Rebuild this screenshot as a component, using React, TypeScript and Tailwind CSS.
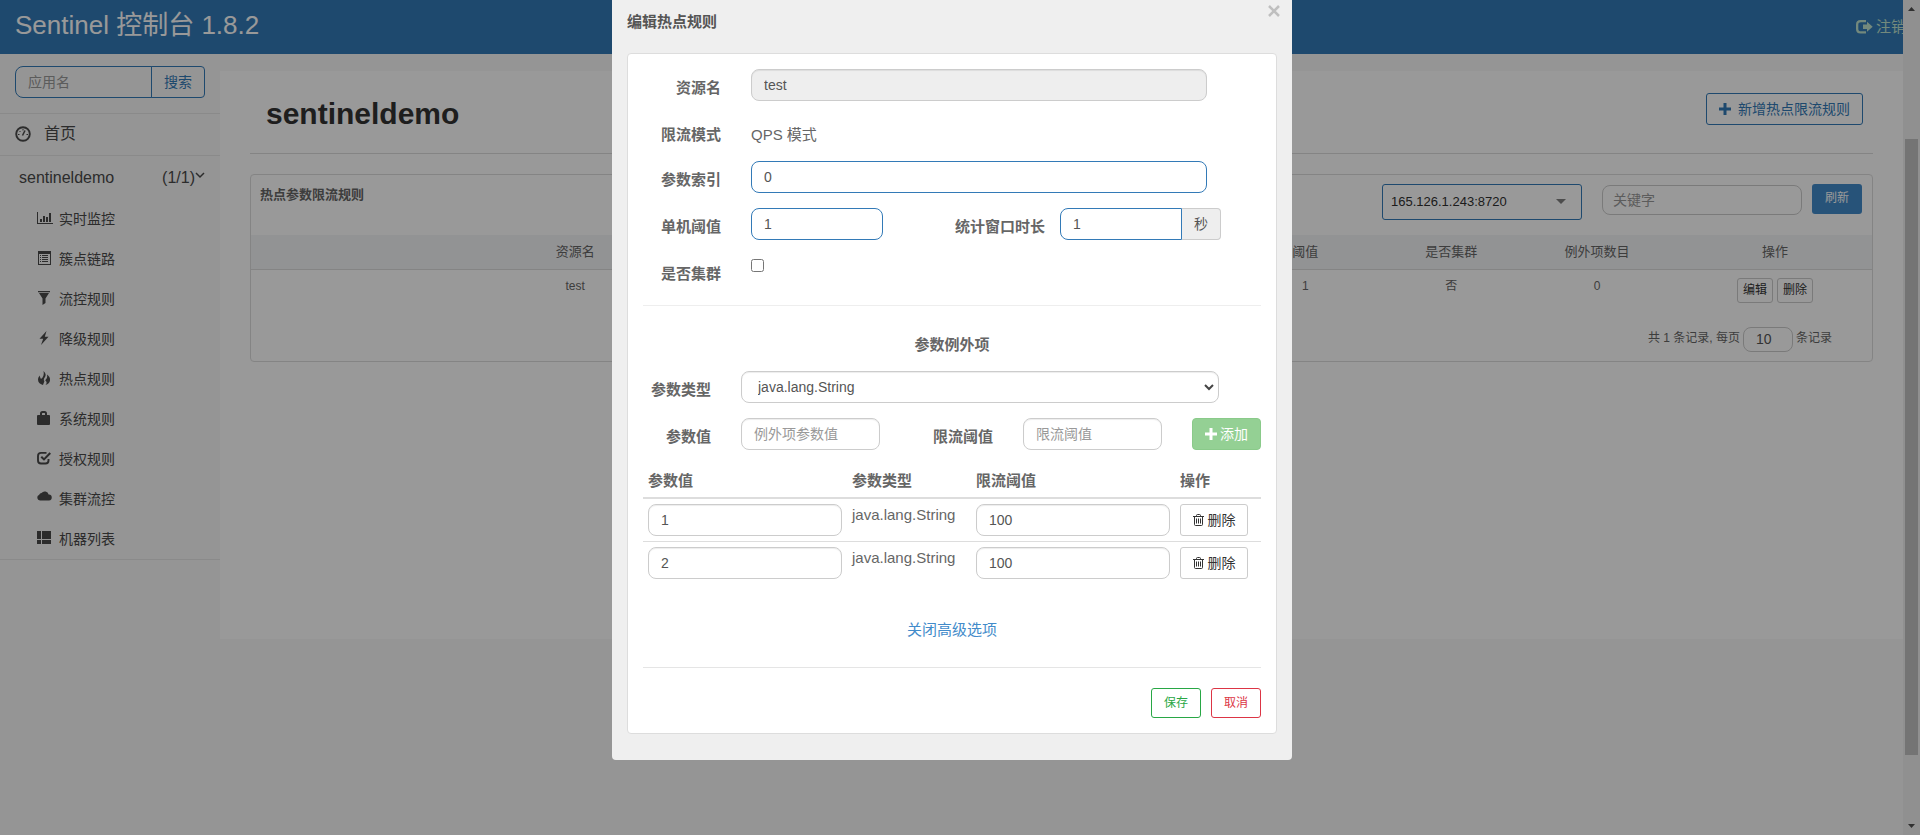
import { useState, type ReactNode } from 'react';

const MENU: { label: string; icon: ReactNode }[] = [
  {
    label: '实时监控',
    icon: (
      <path d="M0 1h1v11h15v1H0zM3 8h2v3H3zM6 5h2v6H6zM9 6h2v5H9zM12 2h2v9h-2z" />
    ),
  },
  {
    label: '簇点链路',
    icon: (
      <path
        fillRule="evenodd"
        d="M1 0h13v14H1zM2 3v10h11V3zM3 4h1v1H3zM5 4h6v1H5zM3 6h1v1H3zM5 6h6v1H5zM3 8h1v1H3zM5 8h6v1H5zM3 10h1v1H3zM5 10h6v1H5z"
      />
    ),
  },
  { label: '流控规则', icon: <path d="M1 0h12v1.200H1zM2 2h10L8.500 7.500V12L5.500 14V7.500z" /> },
  { label: '降级规则', icon: <path d="M9.500 0 2.500 7.800h3.700L4 14l7.500-8.300H7.800z" /> },
  {
    label: '热点规则',
    icon: (
      <path d="M6.500 0c2.500 2.200 2.800 4.600 1.200 6.600C6.700 8 6.500 9 7.400 10.300L6 14C3.500 13.300 1 11.500 1 8.700c0-1.800.8-3 1.800-4.200.2 1.700.6 2.600 1.200 3.500C6.500 6 7.300 3.500 6.500 0zM10 3.500c2 1.500 3.400 3.200 3 6-.3 2.200-1.800 3.800-4.500 4.500 1.600-2 1.500-3-.3-4.800C10 7.800 10.600 6 10 3.500z" />
    ),
  },
  {
    label: '系统规则',
    icon: (
      <path
        fillRule="evenodd"
        d="M3 4V2.500Q3 0 5.500 0h2Q10 0 10 2.500V4h2q1 0 1 1v8q0 1-1 1H1q-1 0-1-1V5q0-1 1-1zM5 4h3V2.500Q8 2 7.500 2h-2Q5 2 5 2.500z"
      />
    ),
  },
  {
    label: '授权规则',
    icon: (
      <>
        <path
          d="M9.500 1.900H4Q1 1.900 1 4.900V9.500Q1 12.500 4 12.500H8.500Q11.500 12.500 11.500 9.500V8"
          fill="none"
          stroke="currentColor"
          strokeWidth="1.900"
        />
        <path d="M3.500 6.500 5 5l2 2 5.500-5.800L14 2.700 7 9.800z" />
      </>
    ),
  },
  {
    label: '集群流控',
    icon: (
      <path d="M3 9.500a3 3 0 0 1-.8-5.800A2.500 2.500 0 0 1 4.500 2 4 4 0 0 1 11.600 3.600 2.900 2.900 0 0 1 12 9.500z" />
    ),
  },
  { label: '机器列表', icon: <path d="M0 0h4v8H0zM5 0h9v8H5zM0 9h4v4H0zM5 9h9v4H5z" /> },
];

const EXCEPTIONS = [
  { value: '1', type: 'java.lang.String', threshold: '100' },
  { value: '2', type: 'java.lang.String', threshold: '100' },
];

const field = 'h-8 rounded-lg border bg-white px-3 text-sm text-[#555] outline-none placeholder:text-[#999]';
const grayField = `${field} border-[#ccc] shadow-[inset_0_1px_1px_rgba(0,0,0,0.075)]`;
const blueField = `${field} border-[#337ab7]`;
const labelText = 'pt-2 text-right font-bold leading-[21px]';

function Plus() {
  return (
    <svg width="12" height="12" viewBox="0 0 12 12" fill="currentColor" aria-hidden="true">
      <path d="M4.500 0h3v4.500H12v3H7.500V12h-3V7.500H0v-3h4.500z" />
    </svg>
  );
}

function Trash() {
  return (
    <svg width="11" height="12" viewBox="0 0 11 12" fill="none" stroke="currentColor" aria-hidden="true">
      <path d="M0 2.500h11M3.500 2.500v-1q0-1 1-1h2q1 0 1 1v1M1.500 2.500v8q0 1 1 1h6q1 0 1-1v-8M3.500 4.500v5M5.500 4.500v5M7.500 4.500v5" />
    </svg>
  );
}

function TopBar() {
  return (
    <header className="flex h-[54px] items-center justify-between overflow-hidden bg-[#337ab7] pl-[15px]">
      <h1 className="pb-1 text-[26px] leading-[36px] text-white">Sentinel 控制台 1.8.2</h1>
      <a href="#logout" className="-mr-[3px] flex items-center gap-[3px] text-[15px] leading-5 whitespace-nowrap text-[#c0e4d0]">
        <svg width="17" height="14" viewBox="0 0 17 14" fill="currentColor" aria-hidden="true">
          <path d="M10 0H4.500Q0 0 0 4.500V9q0 4.500 4.500 4.500H10v-2.200H5Q2.300 11.300 2.300 9V4.500Q2.300 2.200 5 2.200h5z" />
          <path d="M7 4.500h4V1.700l5.700 5-5.700 5V9H7z" />
        </svg>
        注销
      </a>
    </header>
  );
}

function Sidebar() {
  return (
    <aside className="w-[220px] shrink-0 text-[#4a4a4a]">
      <form className="flex px-[15px] pt-3 pb-[15px]">
        <input
          type="text"
          aria-label="应用名"
          placeholder="应用名"
          className="h-8 w-0 flex-1 rounded-l-lg border border-[#337ab7] px-3 text-sm outline-none placeholder:text-[#999]"
        />
        <button type="button" className="-ml-px h-8 w-[54px] rounded-r border border-[#337ab7] text-sm text-[#337ab7]">
          搜索
        </button>
      </form>
      <nav className="border-y border-[#e7e7e7]">
        <a href="#home" className="flex h-[42px] items-center gap-3 border-b border-[#e7e7e7] px-[15px] pb-0.5">
          <svg width="17" height="16" viewBox="0 0 17 16" fill="none" stroke="currentColor" aria-hidden="true">
            <circle cx="8" cy="8" r="6.800" strokeWidth="1.900" />
            <path d="M3 8.500h1.500M11.500 8.500h1.500M4.500 5l1 1M8 3v1.500" />
            <path d="m7.500 9.500 2.500-5" strokeWidth="1.500" />
          </svg>
          <span className="text-base">首页</span>
        </a>
        <a href="#app" className="flex h-[43px] items-center justify-between pr-[15px] pl-[19px] text-base">
          <span>sentineldemo</span>
          <span className="flex items-center">
            (1/1)
            <svg width="10" height="8" viewBox="0 0 10 8" fill="none" stroke="currentColor" strokeWidth="1.500" className="mb-1" aria-hidden="true">
              <path d="m1 1 4 4 4-4" />
            </svg>
          </span>
        </a>
        <ul>
          {MENU.map(({ label, icon }) => (
            <li key={label}>
              <a href={`#${label}`} className="flex h-10 items-center gap-2 pl-[37px] text-sm">
                <svg width="14" height="14" viewBox="0 0 14 14" fill="currentColor" className="mb-0.5 overflow-visible" aria-hidden="true">
                  {icon}
                </svg>
                {label}
              </a>
            </li>
          ))}
        </ul>
      </nav>
    </aside>
  );
}

function RulePanel() {
  return (
    <section className="mt-5 rounded border border-[#ddd] text-[#666]">
      <div className="flex h-[60px] items-start gap-5 pt-[9px] pr-2.5 pl-[9px]">
        <h3 className="mr-auto text-[13px] leading-[21px] font-bold">热点参数限流规则</h3>
        <div className="relative">
          <select
            aria-label="机器"
            className="h-9 w-[200px] appearance-none rounded-[3px] border border-[#337ab7] px-2 text-[13px] text-[#303030]"
          >
            <option>165.126.1.243:8720</option>
          </select>
          <svg width="10" height="5" viewBox="0 0 10 5" fill="#808080" className="absolute top-[15px] right-4" aria-hidden="true">
            <path d="M0 0h10L5 5z" />
          </svg>
        </div>
        <input
          type="text"
          aria-label="关键字"
          placeholder="关键字"
          className="mt-px h-[30px] w-[200px] rounded-lg border border-[#ccc] px-2.5 text-sm outline-none placeholder:text-[#999]"
        />
        <button type="button" className="-ml-2.5 h-[30px] w-[50px] rounded-[3px] bg-[#428bca] pb-0.5 text-xs text-white">
          刷新
        </button>
      </div>
      <table className="w-full table-fixed text-center text-xs">
        <colgroup>
          <col className="w-[40%]" />
          <col />
          <col className="w-[9%]" />
          <col className="w-[9%]" />
          <col className="w-[9%]" />
          <col className="w-[202px]" />
        </colgroup>
        <thead>
          <tr className="h-[34px] border-b border-[#ddd] bg-[#f3f5f7] text-[13px]">
            <th className="font-normal">资源名</th>
            <td />
            <th className="font-normal">阈值</th>
            <th className="font-normal">是否集群</th>
            <th className="font-normal">例外项数目</th>
            <th className="pl-2 font-normal">操作</th>
          </tr>
        </thead>
        <tbody>
          <tr className="align-top leading-4">
            <td className="pt-2">test</td>
            <td />
            <td className="pt-2">1</td>
            <td className="pt-2">否</td>
            <td className="pt-2">0</td>
            <td className="pt-2 pl-2">
              <div className="flex justify-center gap-1 text-[#333]">
                <button type="button" className="h-[25px] w-9 rounded-[3px] border border-[#ccc]">编辑</button>
                <button type="button" className="h-[25px] w-9 rounded-[3px] border border-[#ccc]">删除</button>
              </div>
            </td>
          </tr>
        </tbody>
      </table>
      <div className="flex items-center justify-end gap-[3px] pt-6 pr-10 pb-[9px] text-xs">
        <span className="pb-0.5">共 1 条记录, 每页</span>
        <input
          type="text"
          aria-label="每页记录"
          defaultValue="10"
          className="h-[25px] w-[50px] rounded-lg border border-[#ccc] px-3 text-sm text-[#555] outline-none"
        />
        <span className="pb-0.5">条记录</span>
      </div>
    </section>
  );
}

function EditDialog() {
  const [cluster, setCluster] = useState(false);

  return (
    <div role="dialog" aria-label="编辑热点规则" className="w-[680px] rounded-b bg-[#efefef] px-[15px] pb-[26px] text-[15px] text-[#666]">
      <div className="flex h-[53px] items-start justify-between">
        <h2 className="pt-[11px] leading-[21px] font-bold text-[#555]">编辑热点规则</h2>
        <button type="button" aria-label="关闭" className="-mr-[3px] pt-[5px] text-[#bfbfbf]">
          <svg width="12" height="12" viewBox="0 0 12 12" stroke="currentColor" strokeWidth="2.500" aria-hidden="true">
            <path d="m1 1 10 10M11 1 1 11" />
          </svg>
        </button>
      </div>

      <form className="rounded border border-[#ddd] bg-white p-[15px]">
        <div className="grid grid-cols-[78px_1fr] gap-x-[30px] gap-y-[15px]">
          <label htmlFor="resource" className={labelText}>资源名</label>
          <input
            id="resource"
            disabled
            defaultValue="test"
            className="mr-[54px] h-8 rounded-lg border border-[#ccc] bg-[#eee] px-3 text-sm text-[#555] shadow-[inset_0_1px_1px_rgba(0,0,0,0.075)]"
          />
          <span className={`${labelText} h-[30px]`}>限流模式</span>
          <span className="pt-2 leading-[21px]">QPS 模式</span>
          <label htmlFor="index" className={labelText}>参数索引</label>
          <input id="index" defaultValue="0" className={`${blueField} mr-[54px]`} />
          <label htmlFor="count" className={labelText}>单机阈值</label>
          <div className="flex">
            <input id="count" defaultValue="1" className={`${blueField} w-[132px]`} />
            <label htmlFor="window" className={`${labelText} flex-1 pr-[15px]`}>统计窗口时长</label>
            <input id="window" defaultValue="1" className={`${blueField} w-[122px] rounded-r-none`} />
            <span className="mr-10 flex h-8 w-[39px] items-center justify-center rounded-r border border-l-0 border-[#ccc] bg-[#eee] text-sm text-[#555]">
              秒
            </span>
          </div>
          <label htmlFor="cluster" className={`${labelText} h-8`}>是否集群</label>
          <div className="pt-1">
            <input
              id="cluster"
              type="checkbox"
              checked={cluster}
              onChange={(e) => setCluster(e.target.checked)}
              className="block size-[13px]"
            />
          </div>
        </div>

        <hr className="mt-[18px] border-[#eee]" />
        <h3 className="mt-7 mb-4 text-center leading-[21px] font-bold">参数例外项</h3>

        <div className="grid grid-cols-[68px_1fr] gap-x-[30px] gap-y-[15px]">
          <label htmlFor="paramType" className={labelText}>参数类型</label>
          <div className="relative mr-[42px]">
            <select id="paramType" className={`${grayField} w-full appearance-none px-4`}>
              <option>java.lang.String</option>
            </select>
            <svg width="10" height="7" viewBox="0 0 10 7" fill="none" stroke="#444" strokeWidth="2" className="absolute top-[13px] right-[5px]" aria-hidden="true">
              <path d="m1 1 4 4 4-4" />
            </svg>
          </div>
          <label htmlFor="paramValue" className={labelText}>参数值</label>
          <div className="flex">
            <input id="paramValue" placeholder="例外项参数值" className={`${grayField} w-[139px]`} />
            <label htmlFor="limit" className={`${labelText} flex-1 pr-[30px]`}>限流阈值</label>
            <input id="limit" placeholder="限流阈值" className={`${grayField} w-[139px]`} />
            <button
              type="button"
              disabled
              className="ml-[30px] flex h-8 w-[69px] items-center justify-center gap-[3px] rounded border border-[#4cae4c] bg-[#5cb85c] text-sm text-white opacity-65"
            >
              <Plus />
              添加
            </button>
          </div>
        </div>

        <table className="mt-[15px] w-full table-fixed text-left">
          <colgroup>
            <col className="w-[204px]" />
            <col className="w-[124px]" />
            <col className="w-[204px]" />
            <col />
          </colgroup>
          <thead>
            <tr className="h-[33px] border-b-2 border-[#ddd]">
              <th className="px-[5px]">参数值</th>
              <th className="px-[5px]">参数类型</th>
              <th className="px-[5px]">限流阈值</th>
              <th className="px-[5px]">操作</th>
            </tr>
          </thead>
          <tbody>
            {EXCEPTIONS.map((item) => (
              <tr key={item.value} className="border-b border-[#ddd] align-top last:border-0">
                <td className="p-[5px]">
                  <input aria-label="参数值" defaultValue={item.value} className={`${grayField} block w-full`} />
                </td>
                <td className="p-[5px] leading-[21px]">{item.type}</td>
                <td className="p-[5px]">
                  <input aria-label="限流阈值" defaultValue={item.threshold} className={`${grayField} block w-full`} />
                </td>
                <td className="p-[5px]">
                  <button
                    type="button"
                    className="flex h-8 w-[68px] items-center justify-center gap-1 rounded-[3px] border border-[#ccc] text-sm text-[#333]"
                  >
                    <Trash />
                    删除
                  </button>
                </td>
              </tr>
            ))}
          </tbody>
        </table>

        <div className="pt-[35px] pb-[27px] text-center leading-[21px]">
          <a href="#advanced" className="text-[#428bca]">关闭高级选项</a>
        </div>
        <div className="flex justify-end gap-2.5 border-t border-[#e5e5e5] pt-5 text-xs">
          <button type="button" className="h-[30px] w-[50px] rounded-[3px] border border-[#28a745] text-[#28a745]">保存</button>
          <button type="button" className="h-[30px] w-[50px] rounded-[3px] border border-[#dc3545] text-[#dc3545]">取消</button>
        </div>
      </form>
    </div>
  );
}

export default function App() {
  return (
    <div className="flex min-h-screen bg-[#f8f8f8] font-['Liberation_Sans','Noto_Sans_CJK_SC',sans-serif]">
      <div className="min-w-0 flex-1">
        <TopBar />
        <div className="flex items-start">
          <Sidebar />
          <main className="mt-[17px] flex-1 bg-white px-[30px] pb-[277px]">
            <div className="flex h-[83px] items-center justify-between border-b border-[#ddd] pr-2.5 pl-4">
              <h2 className="pt-0.5 text-[30px] font-bold text-[#333]">sentineldemo</h2>
              <button
                type="button"
                className="mb-1.5 flex h-8 items-center gap-[7px] rounded-[3px] border border-[#337ab7] px-3 text-sm text-[#337ab7]"
              >
                <Plus />
                新增热点限流规则
              </button>
            </div>
            <RulePanel />
          </main>
        </div>
      </div>

      <div className="flex w-[17px] shrink-0 flex-col items-center justify-between bg-[#f1f1f1] py-[7px]" aria-hidden="true">
        <svg width="7" height="4" viewBox="0 0 7 4" fill="#505050">
          <path d="M0 4h7L3.500 0z" />
        </svg>
        <div className="mt-[128px] w-[13px] flex-1 bg-[#c1c1c1]" />
        <svg width="7" height="4" viewBox="0 0 7 4" fill="#505050" className="mt-[69px]">
          <path d="M0 0h7L3.500 4z" />
        </svg>
      </div>

      <div className="fixed inset-0 flex items-start justify-center bg-black/40 pr-4">
        <EditDialog />
      </div>
    </div>
  );
}
